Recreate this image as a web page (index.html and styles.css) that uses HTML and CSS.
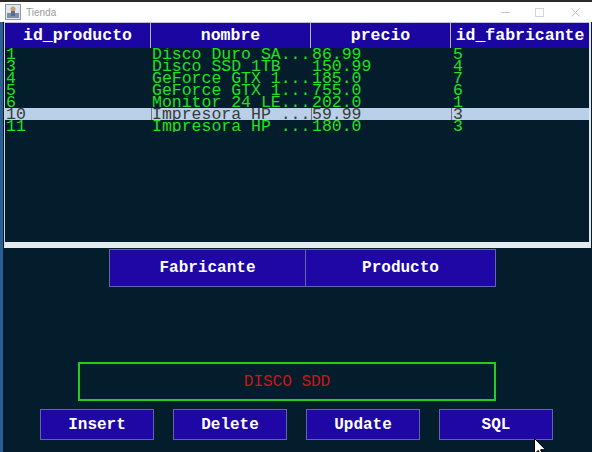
FILE: index.html
```html
<!DOCTYPE html>
<html>
<head>
<meta charset="utf-8">
<link rel="stylesheet" href="styles.css">
</head>
<body>
<div class="window">
  <div class="titlebar">
    <svg class="app-icon" width="16" height="16" viewBox="0 0 16 16">
      <rect x="0.5" y="0.5" width="15" height="15" fill="#dfe6ee" stroke="#8a97a8"/>
      <rect x="2" y="9" width="12" height="5" fill="#7d8ea6"/>
      <circle cx="8" cy="5" r="2.5" fill="#c7a46a"/>
      <rect x="6" y="7" width="4" height="5" fill="#5a6f8f"/>
    </svg>
    <span class="title">Tienda</span>
    <div class="controls">
      <span class="ctl-min"></span>
      <span class="ctl-max"></span>
      <svg class="ctl-close" width="9" height="9" viewBox="0 0 9 9"><path d="M0.5 0.5L8.5 8.5M8.5 0.5L0.5 8.5" stroke="#bdbdbd" stroke-width="1"/></svg>
    </div>
  </div>
  <div class="frame">
    <div class="table-pane">
      <div class="grid head">
        <div class="hcell">id_producto</div>
        <div class="hcell">nombre</div>
        <div class="hcell">precio</div>
        <div class="hcell">id_fabricante</div>
      </div>
      <div class="body">
        <div class="grid row"><div class="cell">1</div><div class="cell">Disco Duro SA...</div><div class="cell">86.99</div><div class="cell">5</div></div>
        <div class="grid row"><div class="cell">3</div><div class="cell">Disco SSD 1TB</div><div class="cell">150.99</div><div class="cell">4</div></div>
        <div class="grid row"><div class="cell">4</div><div class="cell">GeForce GTX 1...</div><div class="cell">185.0</div><div class="cell">7</div></div>
        <div class="grid row"><div class="cell">5</div><div class="cell">GeForce GTX 1...</div><div class="cell">755.0</div><div class="cell">6</div></div>
        <div class="grid row"><div class="cell">6</div><div class="cell">Monitor 24 LE...</div><div class="cell">202.0</div><div class="cell">1</div></div>
        <div class="grid row selected"><div class="cell">10</div><div class="cell">Impresora HP ...</div><div class="cell">59.99</div><div class="cell">3</div></div>
        <div class="grid row"><div class="cell">11</div><div class="cell">Impresora HP ...</div><div class="cell">180.0</div><div class="cell">3</div></div>
      </div>
    </div>
    <div class="tabs">
      <button class="btn tab">Fabricante</button>
      <button class="btn tab">Producto</button>
    </div>
    <div class="field">DISCO SDD</div>
    <div class="actions">
      <button class="btn act">Insert</button>
      <button class="btn act">Delete</button>
      <button class="btn act">Update</button>
      <button class="btn act">SQL</button>
    </div>
  </div>
  <svg class="cursor" width="13" height="20" viewBox="0 0 13 20">
    <path d="M0.5 0.5L0.5 16L4.3 12.4L6.8 18.4L9 17.5L6.6 11.7L11.5 11.7Z" fill="#ffffff" stroke="#000000" stroke-width="1"/>
  </svg>
</div>
</body>
</html>
```

FILE: styles.css
```css
* { box-sizing: border-box; }
html, body { margin: 0; padding: 0; }
body { background: #031d2c; }

.window {
  position: relative;
  width: 592px;
  height: 452px;
  overflow: hidden;
  background: #031d2c;
  font-family: "Liberation Mono", "Courier New", monospace;
}

.titlebar {
  height: 22px;
  border-top: 2px solid #2a2a2a;
  background: #ffffff;
  display: flex;
  align-items: center;
  padding-left: 5px;
}
.app-icon { flex: none; }
.title {
  margin-left: 5px;
  font-family: "Liberation Sans", Arial, sans-serif;
  font-size: 10px;
  color: #9a9a9a;
}
.controls {
  margin-left: auto;
  display: flex;
  align-items: center;
  height: 100%;
}
.ctl-min {
  width: 9px;
  height: 1px;
  background: #c4c4c4;
  margin-right: 25px;
}
.ctl-max {
  width: 9px;
  height: 9px;
  border: 1px solid #d4d4d4;
  margin-right: 27px;
}
.ctl-close { margin-right: 12px; }

.frame {
  height: 430px;
  border-left: 3px solid #2a5e94;
  padding-left: 1px;
  display: flex;
  flex-direction: column;
}

.table-pane {
  width: 587px;
  height: 226px;
  border-left: 1px solid #c9d4df;
  border-right: 2px solid #dfe6ec;
  border-bottom: 6px solid #e5ebee;
  display: flex;
  flex-direction: column;
}

.grid {
  display: grid;
  grid-template-columns: 146px 160px 140px 138px;
}

.head {
  height: 26px;
  background: #1c06a2;
  border-top: 1px solid #c0c0e0;
}
.hcell {
  border-right: 1px solid #b6b6dc;
  color: #ffffff;
  font-weight: bold;
  font-size: 16.5px;
  text-align: center;
  line-height: 25px;
  white-space: nowrap;
  overflow: hidden;
}
.hcell:last-child { border-right: none; }

.body { flex: 1; }
.row { height: 12px; }
.cell {
  height: 12px;
  overflow: hidden;
  white-space: nowrap;
  font-size: 16.5px;
  line-height: 14px;
  color: #22e022;
  padding-left: 1px;
}
.row .cell:last-child { padding-left: 2px; }
.row.selected { background: #b9d0e8; }
.row.selected .cell { color: #3a3a3a; border-left: 1px solid #6a7888; padding-left: 0; }
.row.selected .cell:first-child { border-left: none; padding-left: 1px; }
.row.selected .cell:last-child { padding-left: 1px; }

.btn {
  font-family: "Liberation Mono", "Courier New", monospace;
  font-weight: bold;
  font-size: 16px;
  color: #ffffff;
  background: #1e07a4;
  border: 1px solid #6464ae;
  padding: 0;
  margin: 0;
}

.tabs {
  display: flex;
  margin-top: 1px;
  margin-left: 105px;
}
.tab {
  width: 197px;
  height: 38px;
}
.tab + .tab {
  width: 190px;
  border-left: none;
}

.field {
  margin-top: 75px;
  margin-left: 74px;
  width: 418px;
  height: 39px;
  border: 2px solid #22cc22;
  color: #d41212;
  font-size: 16px;
  text-align: center;
  line-height: 36px;
}

.actions {
  display: flex;
  gap: 19px;
  margin-top: 8px;
  margin-left: 36px;
}
.act {
  width: 114px;
  height: 31px;
}

.cursor {
  position: absolute;
  left: 534px;
  top: 438px;
}
```
